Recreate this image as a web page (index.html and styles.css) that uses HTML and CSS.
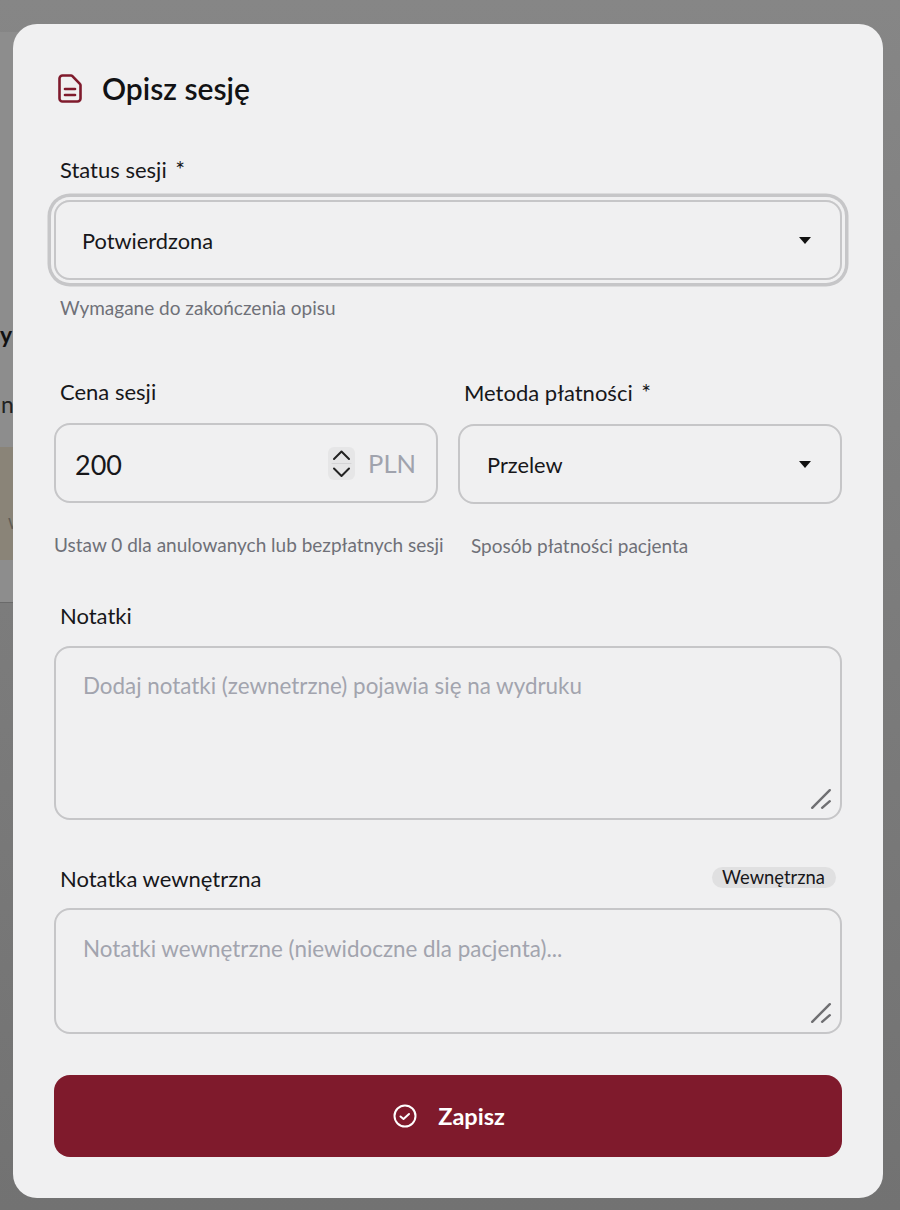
FILE: index.html
```html
<!DOCTYPE html>
<html lang="pl">
<head>
    <meta charset="UTF-8">
    <meta name="viewport" content="width=device-width, initial-scale=1.0">
    <title>Opisz sesję</title>
    <link rel="stylesheet" href="styles.css">
</head>
<body>
    <!-- Strona pod modalem -->
    <div class="backdrop">
        <div class="page-panel"></div>
        <span class="peek peek-name">yn</span>
        <span class="peek peek-sub">n</span>
        <div class="peek-card"><span class="peek-card-text">W</span></div>
    </div>

    <div class="modal">
        <div class="modal-title">
            <svg class="title-icon" viewBox="0 0 24 29" fill="none" stroke="#7f1a2c" stroke-width="2.6" stroke-linecap="round" stroke-linejoin="round">
                <path d="M4.5 1.5h8.5a2 2 0 0 1 1.4.6l7.5 7.8a2 2 0 0 1 .6 1.4v13.2a3 3 0 0 1-3 3h-15a3 3 0 0 1-3-3v-20a3 3 0 0 1 3-3z"/>
                <path d="M7 15h10"/>
                <path d="M7 21h10"/>
            </svg>
            <h2>Opisz sesję</h2>
        </div>

        <!-- Status -->
        <div class="section section-status">
            <label class="field-label">Status sesji <span class="req">*</span></label>
            <div class="field field-focus">
                <span>Potwierdzona</span>
                <span class="caret"></span>
            </div>
            <small class="hint">Wymagane do zakończenia opisu</small>
        </div>

        <!-- Cena i platnosc -->
        <div class="row">
            <div class="col">
                <label class="field-label">Cena sesji</label>
                <div class="field field-price">
                    <span class="price-value">200</span>
                    <span class="spinner">
                        <svg viewBox="0 0 27 33" fill="none" stroke="#222" stroke-width="2" stroke-linecap="round" stroke-linejoin="round">
                            <path d="M6 12l7.5-7.5L21 12"/>
                            <path d="M6 21.5l7.5 7.5L21 21.5"/>
                            <path d="M4 16.5h19" stroke="#d4d4d6" stroke-width="1"/>
                        </svg>
                    </span>
                    <span class="currency">PLN</span>
                </div>
                <small class="hint hint-price">Ustaw 0 dla anulowanych lub bezpłatnych sesji</small>
            </div>
            <div class="col">
                <label class="field-label">Metoda płatności <span class="req">*</span></label>
                <div class="field field-method">
                    <span>Przelew</span>
                    <span class="caret"></span>
                </div>
                <small class="hint hint-method">Sposób płatności pacjenta</small>
            </div>
        </div>

        <!-- Notatki -->
        <div class="section section-notes">
            <label class="field-label">Notatki</label>
            <div class="area area-notes">
                <span class="placeholder">Dodaj notatki (zewnetrzne) pojawia się na wydruku</span>
                <svg class="grip" viewBox="0 0 20 20" stroke="#6f6f72" stroke-width="2.2" stroke-linecap="round">
                    <path d="M2 18L18 2"/>
                    <path d="M11 18l7-6"/>
                </svg>
            </div>
        </div>

        <!-- Notatka wewnetrzna -->
        <div class="section">
            <div class="label-row">
                <label class="field-label">Notatka wewnętrzna</label>
                <span class="badge">Wewnętrzna</span>
            </div>
            <div class="area area-internal">
                <span class="placeholder">Notatki wewnętrzne (niewidoczne dla pacjenta)...</span>
                <svg class="grip" viewBox="0 0 20 20" stroke="#6f6f72" stroke-width="2.2" stroke-linecap="round">
                    <path d="M2 18L18 2"/>
                    <path d="M11 18l7-6"/>
                </svg>
            </div>
        </div>

        <button class="button">
            <svg viewBox="0 0 24 24" fill="none" stroke="#fff" stroke-width="2" stroke-linecap="round" stroke-linejoin="round">
                <circle cx="12" cy="12" r="10.5"/>
                <path d="M7.5 12.5l3 2.5 5.5-5"/>
            </svg>
            Zapisz
        </button>
    </div>
</body>
</html>
```
FILE: styles.css
```css
* {
    box-sizing: border-box;
}

body {
    margin: 0;
    height: 1210px;
    overflow: hidden;
    position: relative;
    font-family: 'Lato', 'Open Sans', sans-serif;
    background: linear-gradient(to bottom, #868686, #727272);
    color: #17171a;
}

.backdrop {
    position: absolute;
    inset: 0;
    overflow: hidden;
}

.page-panel {
    position: absolute;
    left: 0;
    top: 32px;
    width: 20px;
    height: 571px;
    background-color: #8d8d8d;
    border-bottom: 1px solid #6a6a6a;
}

.peek {
    position: absolute;
    left: 0;
    color: #111;
}

.peek-name {
    top: 320px;
    font-size: 23px;
    font-weight: 700;
}

.peek-sub {
    top: 390px;
    left: 1px;
    font-size: 23px;
    color: #222;
}

.peek-card {
    position: absolute;
    left: 0;
    top: 447px;
    width: 20px;
    height: 113px;
    background-color: #8a8478;
}

.peek-card-text {
    position: absolute;
    left: 8px;
    top: 67px;
    font-size: 15px;
    color: #5f5c56;
}

.modal {
    position: absolute;
    left: 13px;
    top: 24px;
    width: 870px;
    height: 1174px;
    padding: 43px 41px 0;
    background-color: #f0f0f1;
    border-radius: 24px;
}

.modal-title {
    display: flex;
    align-items: center;
    gap: 20px;
    height: 42px;
    padding-left: 4px;
}

.title-icon {
    width: 24px;
    height: 29px;
}

h2 {
    margin: 0;
    font-size: 30px;
    font-weight: 600;
    color: #121214;
}

.section-status {
    margin-top: 46px;
}

.field-label {
    display: block;
    padding-left: 6px;
    font-size: 22px;
    line-height: 28px;
    color: #17171a;
}

.req {
    margin-left: 3px;
    font-size: 23px;
}

.field {
    display: flex;
    align-items: center;
    justify-content: space-between;
    height: 80px;
    margin-top: 17px;
    padding: 0 29px 0 26px;
    font-size: 21.8px;
    border: 2px solid #c6c6c8;
    border-radius: 16px;
}

.field-focus {
    margin-top: 16px;
    box-shadow: 0 0 0 3px #f0f0f1, 0 0 0 6.5px #c6c6c8;
}

.field-method {
    padding-left: 27px;
}

.caret {
    width: 0;
    height: 0;
    border-left: 6px solid transparent;
    border-right: 6px solid transparent;
    border-top: 7px solid #111;
}

.hint {
    display: block;
    padding-left: 6px;
    font-size: 19px;
    line-height: 24px;
    color: #6f7078;
}

.section-status .hint {
    margin-top: 16px;
}

.row {
    display: grid;
    grid-template-columns: 384px 384px;
    gap: 20px;
    margin-top: 58px;
}

.field-price {
    padding: 0 20px 0 19px;
}

.price-value {
    flex: 1;
    padding-top: 3px;
    font-size: 27px;
}

.spinner {
    display: flex;
    align-items: center;
    justify-content: center;
    width: 27px;
    height: 33px;
    margin-right: 13px;
    background-color: #e6e6e7;
    border-radius: 6px;
}

.spinner svg {
    width: 27px;
    height: 33px;
}

.currency {
    font-size: 25.5px;
    color: #a0a3ad;
}

.hint-price {
    margin-top: 30px;
    padding-left: 0;
    white-space: nowrap;
}

.hint-method {
    margin-top: 30px;
    padding-left: 13px;
}

.section-notes {
    margin-top: 44px;
}

.area {
    position: relative;
    margin-top: 16px;
    padding: 24px 27px;
    font-size: 22.4px;
    line-height: 28px;
    border: 2px solid #c6c6c8;
    border-radius: 16px;
}

.area-notes {
    height: 174px;
    margin-bottom: 45px;
}

.area-internal {
    height: 126px;
    margin-top: 15px;
    padding-top: 25px;
}

.placeholder {
    color: #a2a4ae;
}

.grip {
    position: absolute;
    right: 8px;
    bottom: 8px;
    width: 22px;
    height: 22px;
}

.label-row {
    display: flex;
    align-items: center;
    justify-content: space-between;
}

.badge {
    margin-right: 6px;
    margin-bottom: 3px;
    padding: 0 11px 0 10px;
    font-size: 18.4px;
    line-height: 21px;
    background-color: #e0e0e1;
    border-radius: 11px;
}

.button {
    display: flex;
    align-items: center;
    justify-content: center;
    gap: 21px;
    width: 788px;
    height: 82px;
    margin-top: 41px;
    padding: 0 0 0 2px;
    font-family: inherit;
    font-size: 23.5px;
    font-weight: 700;
    color: #fff;
    background-color: #7f1a2c;
    border: none;
    border-radius: 16px;
}

.button svg {
    width: 24px;
    height: 24px;
}
```
